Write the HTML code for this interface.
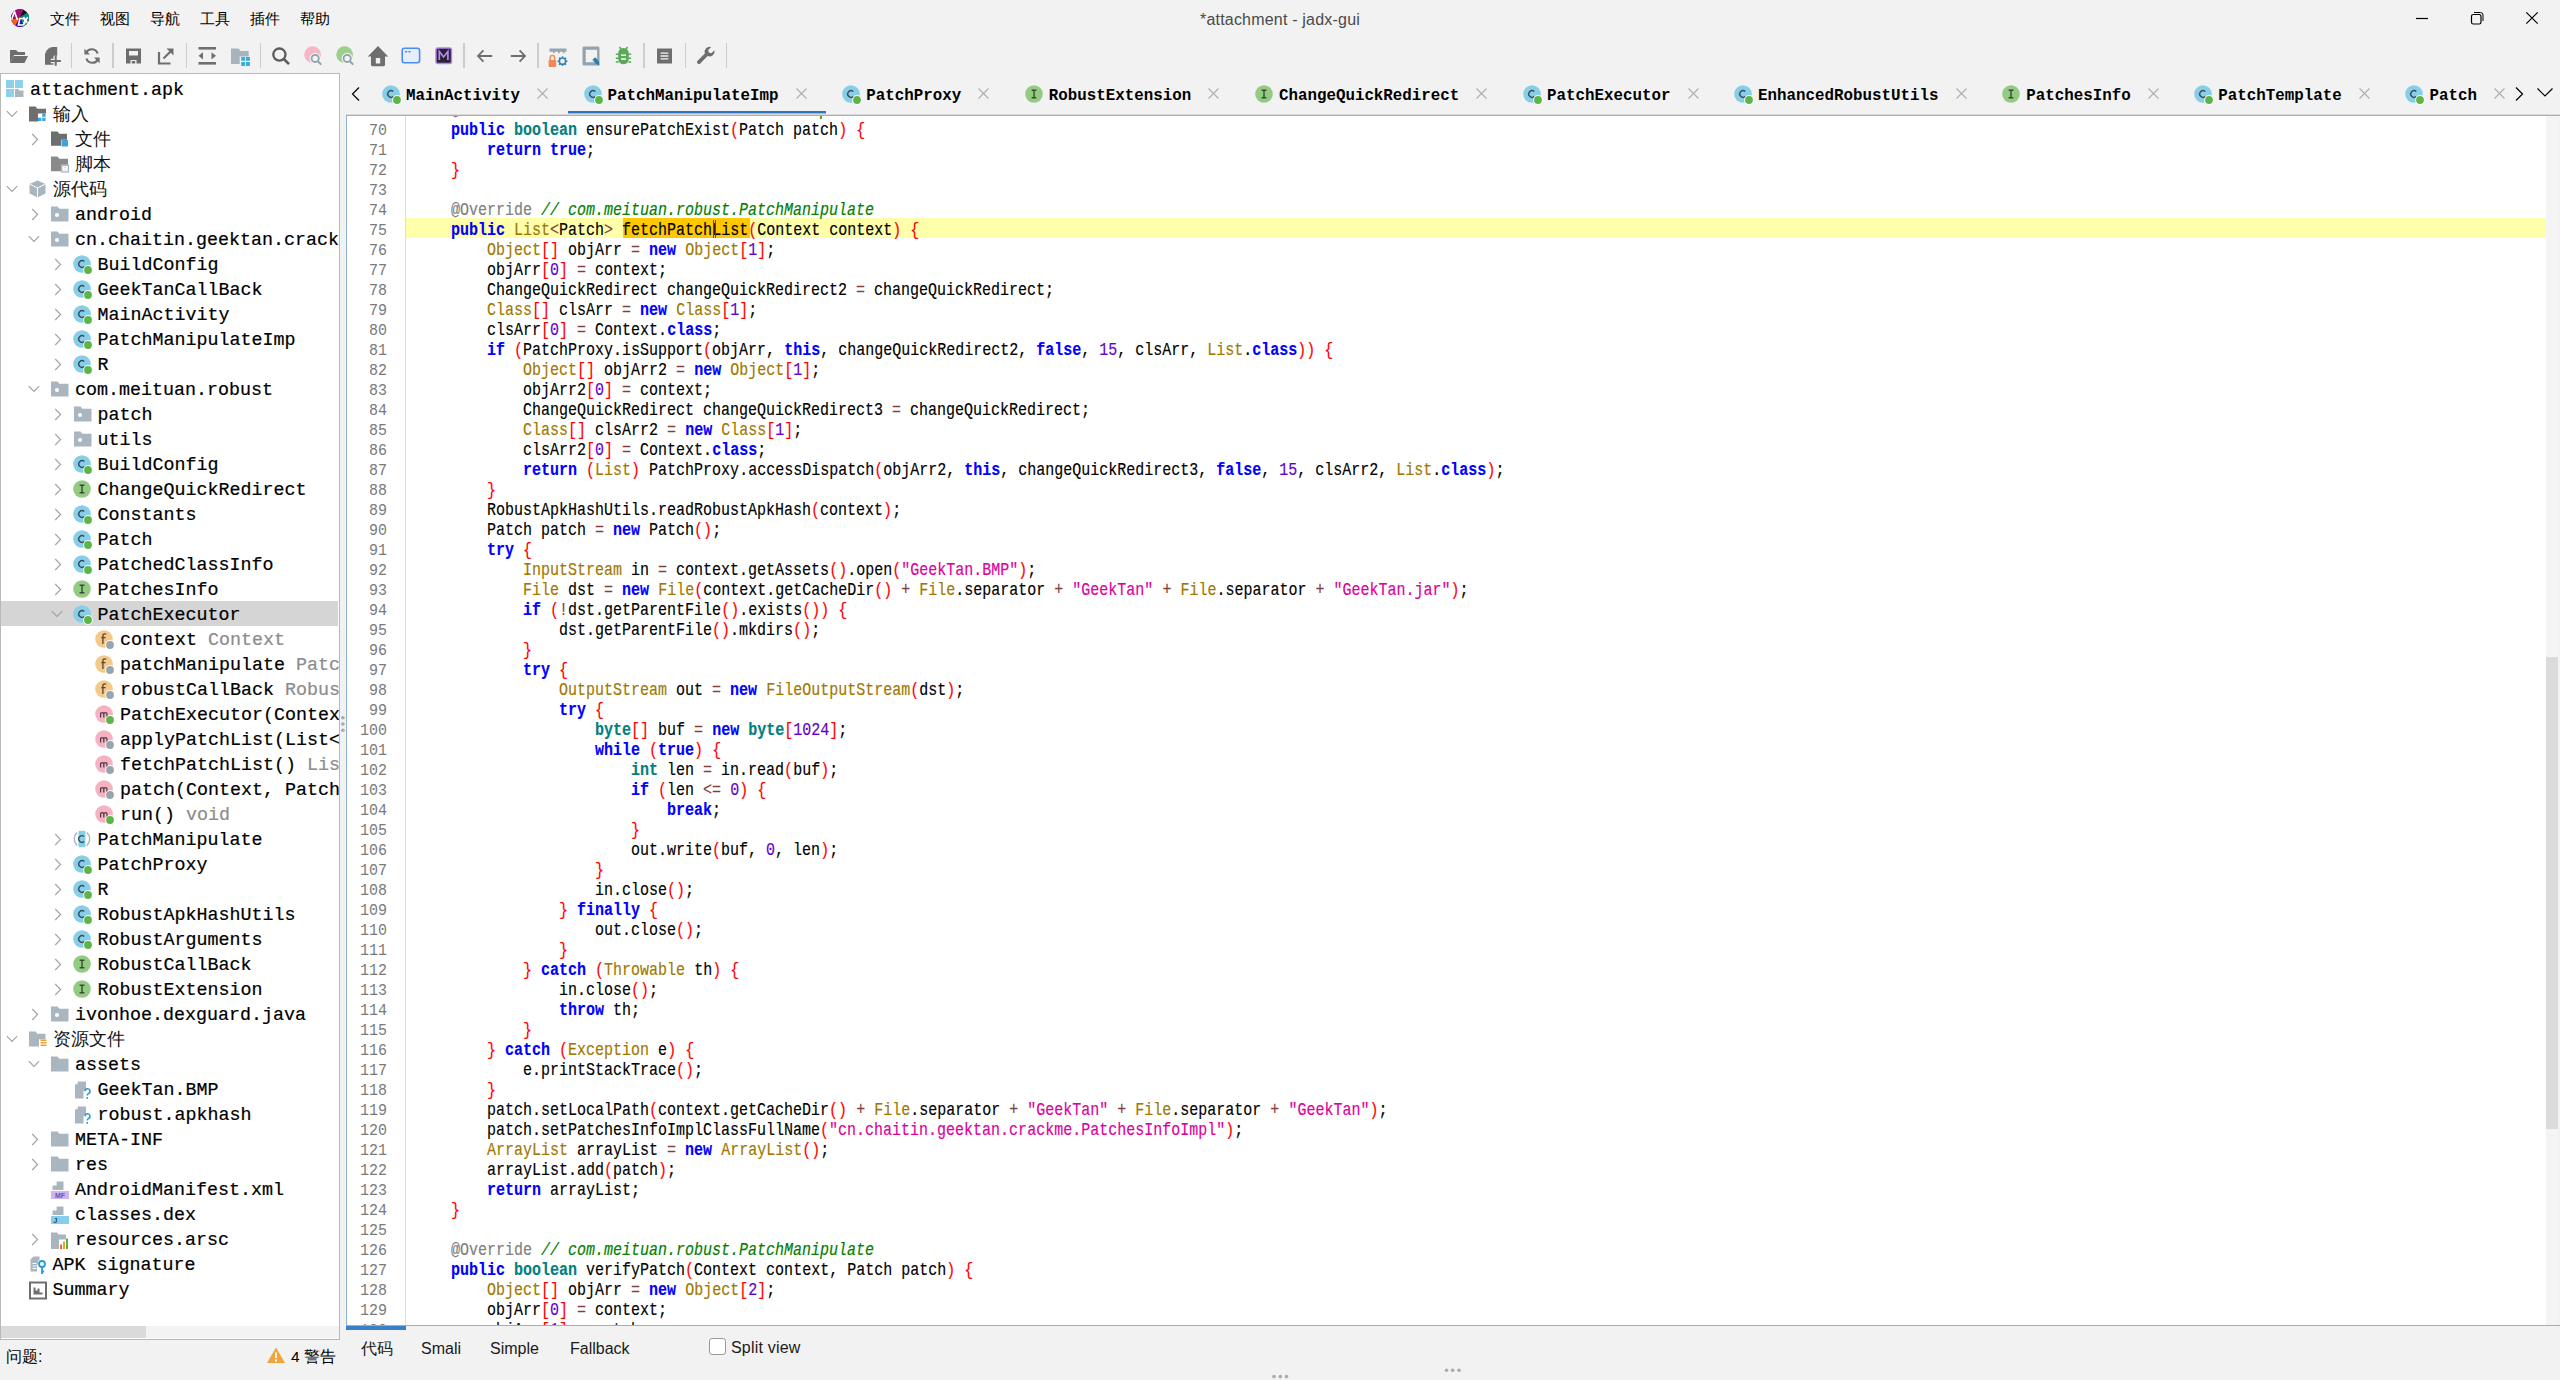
<!DOCTYPE html>
<html><head><meta charset="utf-8"><title>jadx-gui</title><style>
*{box-sizing:border-box}
html,body{margin:0;padding:0}
body{width:2560px;height:1380px;background:#F2F2F2;position:relative;overflow:hidden;font-family:"Liberation Sans",sans-serif;color:#000}
.ab{position:absolute}
svg.ab{display:block}
.menu{position:absolute;top:9px;font-size:15px;line-height:20px;color:#000}
.title{position:absolute;left:0;width:2560px;top:10px;text-align:center;font-size:16px;line-height:20px;color:#4A4A4A;letter-spacing:0.2px}
.sep{position:absolute;top:43px;width:1.5px;height:25px;background:#CDCDCD}
#tree{position:absolute;left:0;top:73px;width:340px;height:1267px;background:#fff;border:1px solid #B9B9B9;overflow:hidden}
#tree .rows{position:absolute;left:-1px;top:-74px;width:340px;height:1380px}
.row{position:absolute;left:0;width:338px;height:25px}
.row.sel{background:#D5D5D5}
.tt{position:absolute;top:2px;-webkit-text-stroke:0.2px currentColor;height:25px;line-height:25px;font-family:"Liberation Mono",monospace;font-size:18.33px;white-space:pre;color:#000}
.gr{color:#8C8C8C}
.cjk{-webkit-text-stroke:0;color:#111}
#hsb{position:absolute;left:1px;top:1326px;width:338px;height:12px;background:#F3F3F3}
#hsb div{position:absolute;left:0;top:0;width:145px;height:12px;background:#DADADA}
.tabt{position:absolute;top:86px;height:20px;line-height:20px;font-family:"Liberation Mono",monospace;font-weight:bold;font-size:15.83px;white-space:pre;color:#000}
#editor{position:absolute;left:346px;top:115px;width:2214px;height:1211px;border:1px solid #8FB2DA;border-right:none;background:#fff;overflow:hidden}
#gutter{position:absolute;left:0;top:0;width:59px;height:100%;border-right:1px solid #DDDDDD;background:#fff}
.gl{position:absolute;left:0;width:40px;height:20px;transform:scaleY(1.1);transform-origin:0 -7px;line-height:20px;text-align:right;font-family:"Liberation Mono",monospace;font-size:15px;color:#7A7A7A}
#code{position:absolute;left:68px;top:0;width:2130px;height:100%}
.cl{position:absolute;left:0;height:20px;-webkit-text-stroke:0.15px currentColor;transform:scaleY(1.18);transform-origin:0 2px;line-height:20px;font-family:"Liberation Mono",monospace;font-size:15px;white-space:pre;color:#000}
.cl b{font-weight:bold}
.kw{color:#0000FF}
.dt{color:#008080}
.sd{color:#A07800}
.se{color:#FF0000}
.op{color:#804040}
.nu{color:#6400C8}
.st{color:#DC009C}
.an{color:#808080}
.cm{color:#008000;font-style:italic}
#vsb{position:absolute;left:2199px;top:0;width:12px;height:100%;background:#F4F4F4;border-right:2px solid #F2F2F2;box-sizing:content-box}
#vsb div{position:absolute;left:0;top:541px;width:12px;height:472px;background:#DBDBDB}
.btab{position:absolute;top:1339px;font-size:16px;line-height:20px;color:#1A1A1A}
</style></head>
<body>
<svg class="ab" style="left:10px;top:8px" width="20" height="20" viewBox="0 0 20 20"><defs><clipPath id="jc"><circle cx="10" cy="10" r="9"/></clipPath></defs><g clip-path="url(#jc)"><rect width="20" height="20" fill="#111"/><path d="M0 12 L10 9 L6 20 L0 20z" fill="#FF5A1F"/><path d="M2 0 L14 0 L10 9 L0 11z" fill="#A0107A"/><path d="M10 9 L20 3 L20 20 L14 20z" fill="#0A8A80"/><path d="M10 9 L14 20 L4 20z" fill="#2A10C8"/><path d="M1.5 12 4.4 3.5 7.5 12" stroke="#fff" stroke-width="1.6" fill="none"/><path d="M8.5 17 9.8 10.5h2.5a2.5 3 0 0 1 0 6.5z" stroke="#fff" stroke-width="1.6" fill="none"/><path d="M13.5 9 17.8 15.5M17.8 9l-4.3 6.5" stroke="#fff" stroke-width="1.6"/></g></svg>
<div class="menu" style="left:50px">文件</div><div class="menu" style="left:100px">视图</div><div class="menu" style="left:150px">导航</div><div class="menu" style="left:200px">工具</div><div class="menu" style="left:250px">插件</div><div class="menu" style="left:300px">帮助</div>
<div class="title">*attachment - jadx-gui</div>
<svg class="ab" style="left:2414px;top:10px" width="16" height="16" viewBox="0 0 16 16"><path d="M2 8.5h12" stroke="#000" stroke-width="1.2"/></svg><svg class="ab" style="left:2469px;top:10px" width="16" height="16" viewBox="0 0 16 16"><rect x="2.5" y="4.5" width="9.5" height="9.5" rx="1.8" stroke="#000" stroke-width="1.2" fill="none"/><path d="M5 2.5h6.5a2.5 2.5 0 0 1 2.5 2.5V11" stroke="#000" stroke-width="1" fill="none"/></svg><svg class="ab" style="left:2524px;top:10px" width="16" height="16" viewBox="0 0 16 16"><path d="M2.3 2.3l11.4 11.4M13.7 2.3 2.3 13.7" stroke="#000" stroke-width="1.2"/></svg>
<svg class="ab" style="left:9px;top:48px" width="20" height="17" viewBox="0 0 20 17"><path d="M1 2h6l2 2h7v3H5L1 15z" fill="#6E6E6E"/><path d="M4.5 8H19l-3.5 7H1z" fill="#6E6E6E"/></svg><svg class="ab" style="left:44px;top:46px" width="19" height="22" viewBox="0 0 19 22"><path d="M1.3 5.7 6.2.9v4.8z" fill="#6E6E6E"/><path d="M1 7.6 7.6 1h5.6v17.8H1z" fill="#6E6E6E"/><path d="M11.7 9.8v10M6.9 15h10" stroke="#F2F2F2" stroke-width="4.4" fill="none"/><path d="M11.7 9.8v10M6.9 15h10" stroke="#6E6E6E" stroke-width="2" fill="none"/></svg><svg class="ab" style="left:83px;top:47px" width="18" height="18" viewBox="0 0 18 18"><path d="M14.6 6.5A6.2 6.2 0 0 0 3.2 5.6" stroke="#6E6E6E" stroke-width="2.2" fill="none"/><path d="M1.4 1.8v5.6H7z" fill="#6E6E6E"/><path d="M3.4 11.5A6.2 6.2 0 0 0 14.8 12.4" stroke="#6E6E6E" stroke-width="2.2" fill="none"/><path d="M16.6 16.2v-5.6H11z" fill="#6E6E6E"/></svg><svg class="ab" style="left:125px;top:47px" width="17" height="18" viewBox="0 0 17 18"><path d="M1 1.5h15v15h-4.5v-3.5h-6v3.5H1zM4 4v4.5h9V4z" fill="#6E6E6E" fill-rule="evenodd"/><rect x="6.8" y="14" width="3.4" height="2.5" fill="#6E6E6E"/></svg><svg class="ab" style="left:157px;top:47px" width="18" height="18" viewBox="0 0 18 18"><path d="M2 5v11.5h11.5" stroke="#6E6E6E" stroke-width="2.2" fill="none"/><path d="M6.5 11.5l7-7" stroke="#6E6E6E" stroke-width="2.2"/><path d="M9.5 1.5h7v7z" fill="#6E6E6E"/></svg><svg class="ab" style="left:197px;top:46px" width="20" height="20" viewBox="0 0 20 20"><rect x="1.5" y="1" width="17.5" height="2.6" fill="#6E6E6E"/><rect x="1.5" y="16" width="17.5" height="2.6" fill="#6E6E6E"/><path d="M1.5 9.8 6 6.2v7.2zM19 9.8l-4.5-3.6v7.2z" fill="#6E6E6E"/></svg><svg class="ab" style="left:230px;top:47px" width="22" height="21" viewBox="0 0 22 21"><path d="M1 1.5h7.5l2.2 2.5h8v5.5h-9v7.5H1z" fill="#A7B4BE"/><g fill="#3BACDF"><rect x="11.2" y="10" width="3.8" height="3.8"/><rect x="15.9" y="10" width="4" height="3.8"/><rect x="11.2" y="15" width="3.8" height="4"/><rect x="15.9" y="15" width="4" height="4"/></g></svg><svg class="ab" style="left:271px;top:46px" width="20" height="20" viewBox="0 0 20 20"><circle cx="8.4" cy="8.6" r="6.1" stroke="#5C5C5C" stroke-width="2.3" fill="none"/><path d="M12.8 13l5.2 5.2" stroke="#5C5C5C" stroke-width="2.6"/></svg><svg class="ab" style="left:304px;top:46px" width="20" height="20" viewBox="0 0 20 20"><circle cx="8.6" cy="8.6" r="8.4" fill="#F6B6C6"/><circle cx="11.2" cy="12.4" r="5.6" fill="#F2F2F2"/><circle cx="11.2" cy="12.4" r="3.6" stroke="#8DA2AE" stroke-width="1.8" fill="none"/><path d="M13.8 15.2l3.4 3.4" stroke="#8DA2AE" stroke-width="2"/></svg><svg class="ab" style="left:336px;top:46px" width="20" height="20" viewBox="0 0 20 20"><circle cx="8.6" cy="8.6" r="8.4" fill="#9DD08A"/><circle cx="11.2" cy="12.4" r="5.6" fill="#F2F2F2"/><circle cx="11.2" cy="12.4" r="3.6" stroke="#8DA2AE" stroke-width="1.8" fill="none"/><path d="M13.8 15.2l3.4 3.4" stroke="#8DA2AE" stroke-width="2"/></svg><svg class="ab" style="left:367px;top:45px" width="22" height="22" viewBox="0 0 22 22"><path d="M11 1 .8 11.4h3.2v8.4c0 .9.5 1.4 1.4 1.4h11.2c.9 0 1.4-.5 1.4-1.4v-8.4h3.2zM8.8 13h4.4v5.6H8.8z" fill="#6E6E6E" fill-rule="evenodd"/></svg><svg class="ab" style="left:401px;top:47px" width="20" height="18" viewBox="0 0 20 18"><rect x="1.2" y="1.2" width="17.4" height="14.6" rx="2.2" fill="#E7EEFB" stroke="#4B8BF4" stroke-width="1.6"/><rect x="4" y="4" width="2.2" height="1.4" fill="#4B8BF4"/><rect x="7.4" y="4" width="2.2" height="1.4" fill="#4B8BF4"/></svg><svg class="ab" style="left:435px;top:47px" width="18" height="18" viewBox="0 0 18 18"><rect x="1" y="1" width="15.5" height="15.5" rx="1.8" fill="#2A2233" stroke="#B384EC" stroke-width="1.4"/><path d="M4.3 13V4.4l4.3 5.5 4.3-5.5V13" stroke="#B48CF0" stroke-width="1.7" fill="none"/></svg><svg class="ab" style="left:476px;top:49px" width="18" height="15" viewBox="0 0 18 15"><path d="M7.4 1.4 2 7l5.4 5.6M2.2 7h14" stroke="#6E6E6E" stroke-width="1.8" fill="none"/></svg><svg class="ab" style="left:509px;top:49px" width="18" height="15" viewBox="0 0 18 15"><path d="M10.6 1.4 16 7l-5.4 5.6M15.8 7h-14" stroke="#6E6E6E" stroke-width="1.8" fill="none"/></svg><svg class="ab" style="left:547px;top:47px" width="23" height="21" viewBox="0 0 23 21"><path d="M2.5 1.5h17v3.2h-2v1.6h-1.6V4.7h-3.2v1.6H11V4.7H7.7v1.6H6.1V4.7H2.5z" fill="#95A6B2"/><rect x="1.6" y="13" width="7.6" height="7" rx=".8" fill="#F2885A"/><path d="M3.2 13v-2.2a2.2 2.2 0 0 1 4.4 0V13" stroke="#F2885A" stroke-width="1.5" fill="none"/><circle cx="15.5" cy="14.2" r="3.2" stroke="#2F86B8" stroke-width="1.7" fill="none"/><path d="M15.5 9.3v1.8M15.5 17.3v1.8M10.6 14.2h1.8M18.6 14.2h1.8M12 10.7l1.3 1.3M17.7 16.4l1.3 1.3M12 17.7l1.3-1.3M17.7 12l1.3-1.3" stroke="#2F86B8" stroke-width="1.4"/></svg><svg class="ab" style="left:581px;top:45px" width="20" height="22" viewBox="0 0 20 22"><path d="M2.5 1.5h14.5a1.5 1.5 0 0 1 1.5 1.5v17.5H3a1.5 1.5 0 0 1-1.5-1.5V2.5zM4.7 4.7v12.6h8.6l-2.2-2.4 2.5-2.1 2.5 2.9V4.7z" fill="#93A3AF" fill-rule="evenodd"/><path d="M12 14.2l2.4-2 3.6 4.6.2 3.6-3.5-1.6z" fill="#2A7FB0"/></svg><svg class="ab" style="left:615px;top:46px" width="17" height="20" viewBox="0 0 17 20"><path d="M4.4 1l2.6 3.4M12.6 1 10 4.4" stroke="#5BA85B" stroke-width="1.6"/><path d="M3.2 7.2a5.3 5.3 0 0 1 10.6 0V13a5.3 5.3 0 0 1-10.6 0z" fill="#5BA85B"/><path d="M.8 8.2h2.8M.8 12.2h2.8M.8 16h2.8M13.4 8.2h2.8M13.4 12.2h2.8M13.4 16h2.8" stroke="#5BA85B" stroke-width="1.5"/><rect x="6" y="8.4" width="5" height="1.6" fill="#F2F2F2"/><rect x="6" y="12.2" width="5" height="1.6" fill="#F2F2F2"/></svg><svg class="ab" style="left:656px;top:47px" width="17" height="18" viewBox="0 0 17 18"><rect x="1" y="1.5" width="15" height="15" fill="#6E6E6E"/><path d="M4.6 6.2h7.8M4.6 9h7.8M4.6 11.8h7.8" stroke="#F2F2F2" stroke-width="1.3"/></svg><svg class="ab" style="left:696px;top:46px" width="20" height="20" viewBox="0 0 20 20"><path d="M18.4 4.2l-3 3-2.6-.6-.6-2.6 3-3a5 5 0 0 0-6.3 6.4L1.6 14.7a1.9 1.9 0 0 0 2.7 2.7l7.3-7.3a5 5 0 0 0 6.8-5.9z" fill="#6E6E6E"/></svg><div class="sep" style="left:70.75px"></div><div class="sep" style="left:112.25px"></div><div class="sep" style="left:185.75px"></div><div class="sep" style="left:259.75px"></div><div class="sep" style="left:463.25px"></div><div class="sep" style="left:537.25px"></div><div class="sep" style="left:643.25px"></div><div class="sep" style="left:684.75px"></div><div class="sep" style="left:725.75px"></div>
<div id="tree"><div class="rows"><div class="row" style="top:76px"><div class="ab" style="left:5.0px;top:3.5px"><svg width="20" height="20" viewBox="0 1.5 20 20"><rect x="1" y="1.5" width="8" height="8" fill="#8DD0EA"/><rect x="10" y="1.5" width="8" height="8" fill="#8DD0EA"/><rect x="1" y="10.5" width="8" height="8" fill="#8DD0EA"/><path d="M10 10.5h3l1.4 1.6H18.5v6.4H10z" fill="#A9B5BF"/></svg></div><div class="tt" style="left:30.0px">attachment.apk<span class="gr"></span></div></div><div class="row" style="top:101px"><svg class="ab" style="left:6px;top:9px" width="12" height="8" viewBox="0 0 12 8"><path d="M.8 1.2 6 6.4l5.2-5.2" stroke="#A0A0A0" stroke-width="1.1" fill="none"/></svg><div class="ab" style="left:27.5px;top:3.5px"><svg width="20" height="18" viewBox="0 0 20 18"><path d="M1 1.5h6.5l1.8 2.2H18v4.8h-8v8H1z" fill="#6E6E6E"/><g fill="#3EA1DD"><rect x="14.2" y="8.5" width="3.3" height="3.3"/><rect x="10" y="12.7" width="3.3" height="3.3"/><rect x="14.2" y="12.7" width="3.3" height="3.3"/></g></svg></div><div class="tt" style="left:52.5px"><span class="cjk">输入</span><span class="gr"></span></div></div><div class="row" style="top:126px"><svg class="ab" style="left:31px;top:7px" width="8" height="13" viewBox="0 0 8 13"><path d="M1.2 1 6.6 6.5 1.2 12" stroke="#A0A0A0" stroke-width="1.1" fill="none"/></svg><div class="ab" style="left:50.0px;top:3.5px"><svg width="20" height="18" viewBox="0 0 20 18"><path d="M1 1.5h6.5l1.8 2.2H17v6h-6v6H1z" fill="#6E6E6E"/><rect x="11.5" y="10" width="6.5" height="6.5" fill="#3EA1DD"/></svg></div><div class="tt" style="left:75.0px"><span class="cjk">文件</span><span class="gr"></span></div></div><div class="row" style="top:151px"><div class="ab" style="left:50.0px;top:3.5px"><svg width="20" height="18" viewBox="0 0 20 18"><path d="M1 1.5h6.5l1.8 2.2H18v6h-7v6.5H1z" fill="#8A8A8A"/><rect x="11.8" y="10.3" width="6.6" height="6.6" fill="#fff" stroke="#A9B5BF" stroke-width="1.3"/><path d="M15.1 12v1M15.1 14.3v1" stroke="#A9B5BF" stroke-width="1"/></svg></div><div class="tt" style="left:75.0px"><span class="cjk">脚本</span><span class="gr"></span></div></div><div class="row" style="top:176px"><svg class="ab" style="left:6px;top:9px" width="12" height="8" viewBox="0 0 12 8"><path d="M.8 1.2 6 6.4l5.2-5.2" stroke="#A0A0A0" stroke-width="1.1" fill="none"/></svg><div class="ab" style="left:27.5px;top:3.5px"><svg width="20" height="20" viewBox="0 1 20 20"><path d="M9.5 1.5 17.5 5v9.5L9.5 18.5 1.5 14.5V5z" fill="#A9B5BF"/><path d="M1.8 5.2 9.5 9l7.7-3.8M9.5 9v9.3" stroke="#fff" stroke-width="1" fill="none"/></svg></div><div class="tt" style="left:52.5px"><span class="cjk">源代码</span><span class="gr"></span></div></div><div class="row" style="top:201px"><svg class="ab" style="left:31px;top:7px" width="8" height="13" viewBox="0 0 8 13"><path d="M1.2 1 6.6 6.5 1.2 12" stroke="#A0A0A0" stroke-width="1.1" fill="none"/></svg><div class="ab" style="left:50.0px;top:3.5px"><svg width="20" height="18" viewBox="0 0 20 18"><path d="M1 1.5h6.5l1.8 2.2H18.5v12.8H1z" fill="#A9B5BF"/><circle cx="7" cy="10" r="2" fill="#fff"/></svg></div><div class="tt" style="left:75.0px">android<span class="gr"></span></div></div><div class="row" style="top:226px"><svg class="ab" style="left:28px;top:9px" width="12" height="8" viewBox="0 0 12 8"><path d="M.8 1.2 6 6.4l5.2-5.2" stroke="#A0A0A0" stroke-width="1.1" fill="none"/></svg><div class="ab" style="left:50.0px;top:3.5px"><svg width="20" height="18" viewBox="0 0 20 18"><path d="M1 1.5h6.5l1.8 2.2H18.5v12.8H1z" fill="#A9B5BF"/><circle cx="7" cy="10" r="2" fill="#fff"/></svg></div><div class="tt" style="left:75.0px">cn.chaitin.geektan.crackme<span class="gr"></span></div></div><div class="row" style="top:251px"><svg class="ab" style="left:54px;top:7px" width="8" height="13" viewBox="0 0 8 13"><path d="M1.2 1 6.6 6.5 1.2 12" stroke="#A0A0A0" stroke-width="1.1" fill="none"/></svg><div class="ab" style="left:72.5px;top:3.5px"><svg width="20" height="20" viewBox="0 0 20 20"><circle cx="9" cy="9" r="8.8" fill="#87CEE8"/><path d="M11.3 6.4A3.4 3.4 0 1 0 11.3 11.6" stroke="#3B4D57" stroke-width="1.35" fill="none"/><circle cx="15" cy="15" r="4.9" fill="#fff" fill-opacity="0.9"/><circle cx="15" cy="15" r="3.9" fill="#5DB548"/></svg></div><div class="tt" style="left:97.5px">BuildConfig<span class="gr"></span></div></div><div class="row" style="top:276px"><svg class="ab" style="left:54px;top:7px" width="8" height="13" viewBox="0 0 8 13"><path d="M1.2 1 6.6 6.5 1.2 12" stroke="#A0A0A0" stroke-width="1.1" fill="none"/></svg><div class="ab" style="left:72.5px;top:3.5px"><svg width="20" height="20" viewBox="0 0 20 20"><circle cx="9" cy="9" r="8.8" fill="#87CEE8"/><path d="M11.3 6.4A3.4 3.4 0 1 0 11.3 11.6" stroke="#3B4D57" stroke-width="1.35" fill="none"/><circle cx="15" cy="15" r="4.9" fill="#fff" fill-opacity="0.9"/><circle cx="15" cy="15" r="3.9" fill="#5DB548"/></svg></div><div class="tt" style="left:97.5px">GeekTanCallBack<span class="gr"></span></div></div><div class="row" style="top:301px"><svg class="ab" style="left:54px;top:7px" width="8" height="13" viewBox="0 0 8 13"><path d="M1.2 1 6.6 6.5 1.2 12" stroke="#A0A0A0" stroke-width="1.1" fill="none"/></svg><div class="ab" style="left:72.5px;top:3.5px"><svg width="20" height="20" viewBox="0 0 20 20"><circle cx="9" cy="9" r="8.8" fill="#87CEE8"/><path d="M11.3 6.4A3.4 3.4 0 1 0 11.3 11.6" stroke="#3B4D57" stroke-width="1.35" fill="none"/><circle cx="15" cy="15" r="4.9" fill="#fff" fill-opacity="0.9"/><circle cx="15" cy="15" r="3.9" fill="#5DB548"/></svg></div><div class="tt" style="left:97.5px">MainActivity<span class="gr"></span></div></div><div class="row" style="top:326px"><svg class="ab" style="left:54px;top:7px" width="8" height="13" viewBox="0 0 8 13"><path d="M1.2 1 6.6 6.5 1.2 12" stroke="#A0A0A0" stroke-width="1.1" fill="none"/></svg><div class="ab" style="left:72.5px;top:3.5px"><svg width="20" height="20" viewBox="0 0 20 20"><circle cx="9" cy="9" r="8.8" fill="#87CEE8"/><path d="M11.3 6.4A3.4 3.4 0 1 0 11.3 11.6" stroke="#3B4D57" stroke-width="1.35" fill="none"/><circle cx="15" cy="15" r="4.9" fill="#fff" fill-opacity="0.9"/><circle cx="15" cy="15" r="3.9" fill="#5DB548"/></svg></div><div class="tt" style="left:97.5px">PatchManipulateImp<span class="gr"></span></div></div><div class="row" style="top:351px"><svg class="ab" style="left:54px;top:7px" width="8" height="13" viewBox="0 0 8 13"><path d="M1.2 1 6.6 6.5 1.2 12" stroke="#A0A0A0" stroke-width="1.1" fill="none"/></svg><div class="ab" style="left:72.5px;top:3.5px"><svg width="20" height="20" viewBox="0 0 20 20"><circle cx="9" cy="9" r="8.8" fill="#87CEE8"/><path d="M11.3 6.4A3.4 3.4 0 1 0 11.3 11.6" stroke="#3B4D57" stroke-width="1.35" fill="none"/><circle cx="15" cy="15" r="4.9" fill="#fff" fill-opacity="0.9"/><circle cx="15" cy="15" r="3.9" fill="#5DB548"/></svg></div><div class="tt" style="left:97.5px">R<span class="gr"></span></div></div><div class="row" style="top:376px"><svg class="ab" style="left:28px;top:9px" width="12" height="8" viewBox="0 0 12 8"><path d="M.8 1.2 6 6.4l5.2-5.2" stroke="#A0A0A0" stroke-width="1.1" fill="none"/></svg><div class="ab" style="left:50.0px;top:3.5px"><svg width="20" height="18" viewBox="0 0 20 18"><path d="M1 1.5h6.5l1.8 2.2H18.5v12.8H1z" fill="#A9B5BF"/><circle cx="7" cy="10" r="2" fill="#fff"/></svg></div><div class="tt" style="left:75.0px">com.meituan.robust<span class="gr"></span></div></div><div class="row" style="top:401px"><svg class="ab" style="left:54px;top:7px" width="8" height="13" viewBox="0 0 8 13"><path d="M1.2 1 6.6 6.5 1.2 12" stroke="#A0A0A0" stroke-width="1.1" fill="none"/></svg><div class="ab" style="left:72.5px;top:3.5px"><svg width="20" height="18" viewBox="0 0 20 18"><path d="M1 1.5h6.5l1.8 2.2H18.5v12.8H1z" fill="#A9B5BF"/><circle cx="7" cy="10" r="2" fill="#fff"/></svg></div><div class="tt" style="left:97.5px">patch<span class="gr"></span></div></div><div class="row" style="top:426px"><svg class="ab" style="left:54px;top:7px" width="8" height="13" viewBox="0 0 8 13"><path d="M1.2 1 6.6 6.5 1.2 12" stroke="#A0A0A0" stroke-width="1.1" fill="none"/></svg><div class="ab" style="left:72.5px;top:3.5px"><svg width="20" height="18" viewBox="0 0 20 18"><path d="M1 1.5h6.5l1.8 2.2H18.5v12.8H1z" fill="#A9B5BF"/><circle cx="7" cy="10" r="2" fill="#fff"/></svg></div><div class="tt" style="left:97.5px">utils<span class="gr"></span></div></div><div class="row" style="top:451px"><svg class="ab" style="left:54px;top:7px" width="8" height="13" viewBox="0 0 8 13"><path d="M1.2 1 6.6 6.5 1.2 12" stroke="#A0A0A0" stroke-width="1.1" fill="none"/></svg><div class="ab" style="left:72.5px;top:3.5px"><svg width="20" height="20" viewBox="0 0 20 20"><circle cx="9" cy="9" r="8.8" fill="#87CEE8"/><path d="M11.3 6.4A3.4 3.4 0 1 0 11.3 11.6" stroke="#3B4D57" stroke-width="1.35" fill="none"/><circle cx="15" cy="15" r="4.9" fill="#fff" fill-opacity="0.9"/><circle cx="15" cy="15" r="3.9" fill="#5DB548"/></svg></div><div class="tt" style="left:97.5px">BuildConfig<span class="gr"></span></div></div><div class="row" style="top:476px"><svg class="ab" style="left:54px;top:7px" width="8" height="13" viewBox="0 0 8 13"><path d="M1.2 1 6.6 6.5 1.2 12" stroke="#A0A0A0" stroke-width="1.1" fill="none"/></svg><div class="ab" style="left:72.5px;top:3.5px"><svg width="20" height="20" viewBox="0 0 20 20"><circle cx="9" cy="9" r="8.8" fill="#93CB83"/><path d="M6.6 5.3h4.8M6.6 12.7h4.8M9 5.3v7.4" stroke="#3A4A36" stroke-width="1.4" fill="none"/></svg></div><div class="tt" style="left:97.5px">ChangeQuickRedirect<span class="gr"></span></div></div><div class="row" style="top:501px"><svg class="ab" style="left:54px;top:7px" width="8" height="13" viewBox="0 0 8 13"><path d="M1.2 1 6.6 6.5 1.2 12" stroke="#A0A0A0" stroke-width="1.1" fill="none"/></svg><div class="ab" style="left:72.5px;top:3.5px"><svg width="20" height="20" viewBox="0 0 20 20"><circle cx="9" cy="9" r="8.8" fill="#87CEE8"/><path d="M11.3 6.4A3.4 3.4 0 1 0 11.3 11.6" stroke="#3B4D57" stroke-width="1.35" fill="none"/><circle cx="15" cy="15" r="4.9" fill="#fff" fill-opacity="0.9"/><circle cx="15" cy="15" r="3.9" fill="#5DB548"/></svg></div><div class="tt" style="left:97.5px">Constants<span class="gr"></span></div></div><div class="row" style="top:526px"><svg class="ab" style="left:54px;top:7px" width="8" height="13" viewBox="0 0 8 13"><path d="M1.2 1 6.6 6.5 1.2 12" stroke="#A0A0A0" stroke-width="1.1" fill="none"/></svg><div class="ab" style="left:72.5px;top:3.5px"><svg width="20" height="20" viewBox="0 0 20 20"><circle cx="9" cy="9" r="8.8" fill="#87CEE8"/><path d="M11.3 6.4A3.4 3.4 0 1 0 11.3 11.6" stroke="#3B4D57" stroke-width="1.35" fill="none"/><circle cx="15" cy="15" r="4.9" fill="#fff" fill-opacity="0.9"/><circle cx="15" cy="15" r="3.9" fill="#5DB548"/></svg></div><div class="tt" style="left:97.5px">Patch<span class="gr"></span></div></div><div class="row" style="top:551px"><svg class="ab" style="left:54px;top:7px" width="8" height="13" viewBox="0 0 8 13"><path d="M1.2 1 6.6 6.5 1.2 12" stroke="#A0A0A0" stroke-width="1.1" fill="none"/></svg><div class="ab" style="left:72.5px;top:3.5px"><svg width="20" height="20" viewBox="0 0 20 20"><circle cx="9" cy="9" r="8.8" fill="#87CEE8"/><path d="M11.3 6.4A3.4 3.4 0 1 0 11.3 11.6" stroke="#3B4D57" stroke-width="1.35" fill="none"/><circle cx="15" cy="15" r="4.9" fill="#fff" fill-opacity="0.9"/><circle cx="15" cy="15" r="3.9" fill="#5DB548"/></svg></div><div class="tt" style="left:97.5px">PatchedClassInfo<span class="gr"></span></div></div><div class="row" style="top:576px"><svg class="ab" style="left:54px;top:7px" width="8" height="13" viewBox="0 0 8 13"><path d="M1.2 1 6.6 6.5 1.2 12" stroke="#A0A0A0" stroke-width="1.1" fill="none"/></svg><div class="ab" style="left:72.5px;top:3.5px"><svg width="20" height="20" viewBox="0 0 20 20"><circle cx="9" cy="9" r="8.8" fill="#93CB83"/><path d="M6.6 5.3h4.8M6.6 12.7h4.8M9 5.3v7.4" stroke="#3A4A36" stroke-width="1.4" fill="none"/></svg></div><div class="tt" style="left:97.5px">PatchesInfo<span class="gr"></span></div></div><div class="row sel" style="top:601px"><svg class="ab" style="left:51px;top:9px" width="12" height="8" viewBox="0 0 12 8"><path d="M.8 1.2 6 6.4l5.2-5.2" stroke="#A0A0A0" stroke-width="1.1" fill="none"/></svg><div class="ab" style="left:72.5px;top:3.5px"><svg width="20" height="20" viewBox="0 0 20 20"><circle cx="9" cy="9" r="8.8" fill="#87CEE8"/><path d="M11.3 6.4A3.4 3.4 0 1 0 11.3 11.6" stroke="#3B4D57" stroke-width="1.35" fill="none"/><circle cx="15" cy="15" r="4.9" fill="#fff" fill-opacity="0.9"/><circle cx="15" cy="15" r="3.9" fill="#5DB548"/></svg></div><div class="tt" style="left:97.5px">PatchExecutor<span class="gr"></span></div></div><div class="row" style="top:626px"><div class="ab" style="left:95.0px;top:3.5px"><svg width="20" height="20" viewBox="0 0 20 20"><circle cx="9" cy="9" r="8.8" fill="#F5C98A"/><path d="M11.2 4.3c-.5-.4-1-.5-1.5-.5-1.1 0-1.8.7-1.8 2V14M6.3 7.6h4.2" stroke="#574634" stroke-width="1.3" fill="none"/><circle cx="15" cy="15" r="4.9" fill="#fff" fill-opacity="0.9"/><circle cx="15" cy="15" r="3.9" fill="#97A4AE"/></svg></div><div class="tt" style="left:120.0px">context<span class="gr"> Context</span></div></div><div class="row" style="top:651px"><div class="ab" style="left:95.0px;top:3.5px"><svg width="20" height="20" viewBox="0 0 20 20"><circle cx="9" cy="9" r="8.8" fill="#F5C98A"/><path d="M11.2 4.3c-.5-.4-1-.5-1.5-.5-1.1 0-1.8.7-1.8 2V14M6.3 7.6h4.2" stroke="#574634" stroke-width="1.3" fill="none"/><circle cx="15" cy="15" r="4.9" fill="#fff" fill-opacity="0.9"/><circle cx="15" cy="15" r="3.9" fill="#97A4AE"/></svg></div><div class="tt" style="left:120.0px">patchManipulate<span class="gr"> PatchManipulate</span></div></div><div class="row" style="top:676px"><div class="ab" style="left:95.0px;top:3.5px"><svg width="20" height="20" viewBox="0 0 20 20"><circle cx="9" cy="9" r="8.8" fill="#F5C98A"/><path d="M11.2 4.3c-.5-.4-1-.5-1.5-.5-1.1 0-1.8.7-1.8 2V14M6.3 7.6h4.2" stroke="#574634" stroke-width="1.3" fill="none"/><circle cx="15" cy="15" r="4.9" fill="#fff" fill-opacity="0.9"/><circle cx="15" cy="15" r="3.9" fill="#97A4AE"/></svg></div><div class="tt" style="left:120.0px">robustCallBack<span class="gr"> RobustCallBack</span></div></div><div class="row" style="top:701px"><div class="ab" style="left:95.0px;top:3.5px"><svg width="20" height="20" viewBox="0 0 20 20"><circle cx="9" cy="9" r="8.8" fill="#F6B2C2"/><path d="M5.6 12.6V7.8M5.6 9c.3-.8 1-1.3 1.7-1.3.9 0 1.5.6 1.5 1.6v3.3M8.8 9c.3-.8 1-1.3 1.7-1.3.9 0 1.5.6 1.5 1.6v3.3" stroke="#4F3A40" stroke-width="1.25" fill="none"/><circle cx="15" cy="15" r="4.9" fill="#fff" fill-opacity="0.9"/><circle cx="15" cy="15" r="3.9" fill="#5DB548"/></svg></div><div class="tt" style="left:120.0px">PatchExecutor(Context, PatchManipulate, RobustCallBack)<span class="gr"></span></div></div><div class="row" style="top:726px"><div class="ab" style="left:95.0px;top:3.5px"><svg width="20" height="20" viewBox="0 0 20 20"><circle cx="9" cy="9" r="8.8" fill="#F6B2C2"/><path d="M5.6 12.6V7.8M5.6 9c.3-.8 1-1.3 1.7-1.3.9 0 1.5.6 1.5 1.6v3.3M8.8 9c.3-.8 1-1.3 1.7-1.3.9 0 1.5.6 1.5 1.6v3.3" stroke="#4F3A40" stroke-width="1.25" fill="none"/><circle cx="15" cy="15" r="4.9" fill="#fff" fill-opacity="0.9"/><circle cx="15" cy="15" r="3.9" fill="#97A4AE"/></svg></div><div class="tt" style="left:120.0px">applyPatchList(List&lt;Patch&gt;)<span class="gr"> void</span></div></div><div class="row" style="top:751px"><div class="ab" style="left:95.0px;top:3.5px"><svg width="20" height="20" viewBox="0 0 20 20"><circle cx="9" cy="9" r="8.8" fill="#F6B2C2"/><path d="M5.6 12.6V7.8M5.6 9c.3-.8 1-1.3 1.7-1.3.9 0 1.5.6 1.5 1.6v3.3M8.8 9c.3-.8 1-1.3 1.7-1.3.9 0 1.5.6 1.5 1.6v3.3" stroke="#4F3A40" stroke-width="1.25" fill="none"/><circle cx="15" cy="15" r="4.9" fill="#fff" fill-opacity="0.9"/><circle cx="15" cy="15" r="3.9" fill="#97A4AE"/></svg></div><div class="tt" style="left:120.0px">fetchPatchList()<span class="gr"> List&lt;Patch&gt;</span></div></div><div class="row" style="top:776px"><div class="ab" style="left:95.0px;top:3.5px"><svg width="20" height="20" viewBox="0 0 20 20"><circle cx="9" cy="9" r="8.8" fill="#F6B2C2"/><path d="M5.6 12.6V7.8M5.6 9c.3-.8 1-1.3 1.7-1.3.9 0 1.5.6 1.5 1.6v3.3M8.8 9c.3-.8 1-1.3 1.7-1.3.9 0 1.5.6 1.5 1.6v3.3" stroke="#4F3A40" stroke-width="1.25" fill="none"/><circle cx="15" cy="15" r="4.9" fill="#fff" fill-opacity="0.9"/><circle cx="15" cy="15" r="3.9" fill="#97A4AE"/></svg></div><div class="tt" style="left:120.0px">patch(Context, Patch)<span class="gr"> boolean</span></div></div><div class="row" style="top:801px"><div class="ab" style="left:95.0px;top:3.5px"><svg width="20" height="20" viewBox="0 0 20 20"><circle cx="9" cy="9" r="8.8" fill="#F6B2C2"/><path d="M5.6 12.6V7.8M5.6 9c.3-.8 1-1.3 1.7-1.3.9 0 1.5.6 1.5 1.6v3.3M8.8 9c.3-.8 1-1.3 1.7-1.3.9 0 1.5.6 1.5 1.6v3.3" stroke="#4F3A40" stroke-width="1.25" fill="none"/><circle cx="15" cy="15" r="4.9" fill="#fff" fill-opacity="0.9"/><circle cx="15" cy="15" r="3.9" fill="#5DB548"/></svg></div><div class="tt" style="left:120.0px">run()<span class="gr"> void</span></div></div><div class="row" style="top:826px"><svg class="ab" style="left:54px;top:7px" width="8" height="13" viewBox="0 0 8 13"><path d="M1.2 1 6.6 6.5 1.2 12" stroke="#A0A0A0" stroke-width="1.1" fill="none"/></svg><div class="ab" style="left:72.5px;top:3.5px"><svg width="20" height="20" viewBox="0 0 20 20"><path d="M4.2 2.6A8.6 8.6 0 0 0 4.2 15.4" fill="none" stroke="#B0B8BE" stroke-width="1.4"/><path d="M13.8 2.6A8.6 8.6 0 0 1 13.8 15.4" fill="none" stroke="#B0B8BE" stroke-width="1.4"/><rect x="5.5" y="0.8" width="7" height="16.4" rx="1" fill="#87CEE8"/><path d="M11 6.6A3.2 3.2 0 1 0 11 11.4" stroke="#3B4D57" stroke-width="1.3" fill="none"/></svg></div><div class="tt" style="left:97.5px">PatchManipulate<span class="gr"></span></div></div><div class="row" style="top:851px"><svg class="ab" style="left:54px;top:7px" width="8" height="13" viewBox="0 0 8 13"><path d="M1.2 1 6.6 6.5 1.2 12" stroke="#A0A0A0" stroke-width="1.1" fill="none"/></svg><div class="ab" style="left:72.5px;top:3.5px"><svg width="20" height="20" viewBox="0 0 20 20"><circle cx="9" cy="9" r="8.8" fill="#87CEE8"/><path d="M11.3 6.4A3.4 3.4 0 1 0 11.3 11.6" stroke="#3B4D57" stroke-width="1.35" fill="none"/><circle cx="15" cy="15" r="4.9" fill="#fff" fill-opacity="0.9"/><circle cx="15" cy="15" r="3.9" fill="#5DB548"/></svg></div><div class="tt" style="left:97.5px">PatchProxy<span class="gr"></span></div></div><div class="row" style="top:876px"><svg class="ab" style="left:54px;top:7px" width="8" height="13" viewBox="0 0 8 13"><path d="M1.2 1 6.6 6.5 1.2 12" stroke="#A0A0A0" stroke-width="1.1" fill="none"/></svg><div class="ab" style="left:72.5px;top:3.5px"><svg width="20" height="20" viewBox="0 0 20 20"><circle cx="9" cy="9" r="8.8" fill="#87CEE8"/><path d="M11.3 6.4A3.4 3.4 0 1 0 11.3 11.6" stroke="#3B4D57" stroke-width="1.35" fill="none"/><circle cx="15" cy="15" r="4.9" fill="#fff" fill-opacity="0.9"/><circle cx="15" cy="15" r="3.9" fill="#5DB548"/></svg></div><div class="tt" style="left:97.5px">R<span class="gr"></span></div></div><div class="row" style="top:901px"><svg class="ab" style="left:54px;top:7px" width="8" height="13" viewBox="0 0 8 13"><path d="M1.2 1 6.6 6.5 1.2 12" stroke="#A0A0A0" stroke-width="1.1" fill="none"/></svg><div class="ab" style="left:72.5px;top:3.5px"><svg width="20" height="20" viewBox="0 0 20 20"><circle cx="9" cy="9" r="8.8" fill="#87CEE8"/><path d="M11.3 6.4A3.4 3.4 0 1 0 11.3 11.6" stroke="#3B4D57" stroke-width="1.35" fill="none"/><circle cx="15" cy="15" r="4.9" fill="#fff" fill-opacity="0.9"/><circle cx="15" cy="15" r="3.9" fill="#5DB548"/></svg></div><div class="tt" style="left:97.5px">RobustApkHashUtils<span class="gr"></span></div></div><div class="row" style="top:926px"><svg class="ab" style="left:54px;top:7px" width="8" height="13" viewBox="0 0 8 13"><path d="M1.2 1 6.6 6.5 1.2 12" stroke="#A0A0A0" stroke-width="1.1" fill="none"/></svg><div class="ab" style="left:72.5px;top:3.5px"><svg width="20" height="20" viewBox="0 0 20 20"><circle cx="9" cy="9" r="8.8" fill="#87CEE8"/><path d="M11.3 6.4A3.4 3.4 0 1 0 11.3 11.6" stroke="#3B4D57" stroke-width="1.35" fill="none"/><circle cx="15" cy="15" r="4.9" fill="#fff" fill-opacity="0.9"/><circle cx="15" cy="15" r="3.9" fill="#5DB548"/></svg></div><div class="tt" style="left:97.5px">RobustArguments<span class="gr"></span></div></div><div class="row" style="top:951px"><svg class="ab" style="left:54px;top:7px" width="8" height="13" viewBox="0 0 8 13"><path d="M1.2 1 6.6 6.5 1.2 12" stroke="#A0A0A0" stroke-width="1.1" fill="none"/></svg><div class="ab" style="left:72.5px;top:3.5px"><svg width="20" height="20" viewBox="0 0 20 20"><circle cx="9" cy="9" r="8.8" fill="#93CB83"/><path d="M6.6 5.3h4.8M6.6 12.7h4.8M9 5.3v7.4" stroke="#3A4A36" stroke-width="1.4" fill="none"/></svg></div><div class="tt" style="left:97.5px">RobustCallBack<span class="gr"></span></div></div><div class="row" style="top:976px"><svg class="ab" style="left:54px;top:7px" width="8" height="13" viewBox="0 0 8 13"><path d="M1.2 1 6.6 6.5 1.2 12" stroke="#A0A0A0" stroke-width="1.1" fill="none"/></svg><div class="ab" style="left:72.5px;top:3.5px"><svg width="20" height="20" viewBox="0 0 20 20"><circle cx="9" cy="9" r="8.8" fill="#93CB83"/><path d="M6.6 5.3h4.8M6.6 12.7h4.8M9 5.3v7.4" stroke="#3A4A36" stroke-width="1.4" fill="none"/></svg></div><div class="tt" style="left:97.5px">RobustExtension<span class="gr"></span></div></div><div class="row" style="top:1001px"><svg class="ab" style="left:31px;top:7px" width="8" height="13" viewBox="0 0 8 13"><path d="M1.2 1 6.6 6.5 1.2 12" stroke="#A0A0A0" stroke-width="1.1" fill="none"/></svg><div class="ab" style="left:50.0px;top:3.5px"><svg width="20" height="18" viewBox="0 0 20 18"><path d="M1 1.5h6.5l1.8 2.2H18.5v12.8H1z" fill="#A9B5BF"/><circle cx="7" cy="10" r="2" fill="#fff"/></svg></div><div class="tt" style="left:75.0px">ivonhoe.dexguard.java<span class="gr"></span></div></div><div class="row" style="top:1026px"><svg class="ab" style="left:6px;top:9px" width="12" height="8" viewBox="0 0 12 8"><path d="M.8 1.2 6 6.4l5.2-5.2" stroke="#A0A0A0" stroke-width="1.1" fill="none"/></svg><div class="ab" style="left:27.5px;top:3.5px"><svg width="20" height="18" viewBox="0 0 20 18"><path d="M1 1.5h6.5l1.8 2.2H17.5v5.5h-6.5v7.3H1z" fill="#A9B5BF"/><path d="M12.5 10.3h6M12.5 12.8h6M12.5 15.3h6" stroke="#F0A030" stroke-width="1.4"/></svg></div><div class="tt" style="left:52.5px"><span class="cjk">资源文件</span><span class="gr"></span></div></div><div class="row" style="top:1051px"><svg class="ab" style="left:28px;top:9px" width="12" height="8" viewBox="0 0 12 8"><path d="M.8 1.2 6 6.4l5.2-5.2" stroke="#A0A0A0" stroke-width="1.1" fill="none"/></svg><div class="ab" style="left:50.0px;top:3.5px"><svg width="20" height="18" viewBox="0 0 20 18"><path d="M1 1.5h6.5l1.8 2.2H18.5v12.8H1z" fill="#A9B5BF"/></svg></div><div class="tt" style="left:75.0px">assets<span class="gr"></span></div></div><div class="row" style="top:1076px"><div class="ab" style="left:72.5px;top:3.5px"><svg width="20" height="20" viewBox="0 0 20 20"><path d="M5 1.5h8v9h-2.5v8H2V4.5z" fill="#A9B5BF"/><path d="M2 4.2 4.7 1.5v2.7z" fill="#fff"/><path d="M12 11.3a2.5 2.5 0 1 1 3.2 2.4c-.8.3-1 .8-1 1.8" stroke="#2C9AD8" stroke-width="1.5" fill="none"/><rect x="13.4" y="17" width="1.6" height="1.8" fill="#2C9AD8"/></svg></div><div class="tt" style="left:97.5px">GeekTan.BMP<span class="gr"></span></div></div><div class="row" style="top:1101px"><div class="ab" style="left:72.5px;top:3.5px"><svg width="20" height="20" viewBox="0 0 20 20"><path d="M5 1.5h8v9h-2.5v8H2V4.5z" fill="#A9B5BF"/><path d="M2 4.2 4.7 1.5v2.7z" fill="#fff"/><path d="M12 11.3a2.5 2.5 0 1 1 3.2 2.4c-.8.3-1 .8-1 1.8" stroke="#2C9AD8" stroke-width="1.5" fill="none"/><rect x="13.4" y="17" width="1.6" height="1.8" fill="#2C9AD8"/></svg></div><div class="tt" style="left:97.5px">robust.apkhash<span class="gr"></span></div></div><div class="row" style="top:1126px"><svg class="ab" style="left:31px;top:7px" width="8" height="13" viewBox="0 0 8 13"><path d="M1.2 1 6.6 6.5 1.2 12" stroke="#A0A0A0" stroke-width="1.1" fill="none"/></svg><div class="ab" style="left:50.0px;top:3.5px"><svg width="20" height="18" viewBox="0 0 20 18"><path d="M1 1.5h6.5l1.8 2.2H18.5v12.8H1z" fill="#A9B5BF"/></svg></div><div class="tt" style="left:75.0px">META-INF<span class="gr"></span></div></div><div class="row" style="top:1151px"><svg class="ab" style="left:31px;top:7px" width="8" height="13" viewBox="0 0 8 13"><path d="M1.2 1 6.6 6.5 1.2 12" stroke="#A0A0A0" stroke-width="1.1" fill="none"/></svg><div class="ab" style="left:50.0px;top:3.5px"><svg width="20" height="18" viewBox="0 0 20 18"><path d="M1 1.5h6.5l1.8 2.2H18.5v12.8H1z" fill="#A9B5BF"/></svg></div><div class="tt" style="left:75.0px">res<span class="gr"></span></div></div><div class="row" style="top:1176px"><div class="ab" style="left:50.0px;top:3.5px"><svg width="20" height="20" viewBox="0 0 20 20"><path d="M7 1.5h6.5V10H2.5V6z" fill="#A9B5BF"/><path d="M3 5.5 6.6 1.8v3.7z" fill="#fff"/><rect x="1" y="11" width="18" height="8" fill="#CDB6F2"/><text x="10" y="18" font-family="Liberation Sans" font-size="7" font-weight="bold" text-anchor="middle" fill="#7054A8">MF</text></svg></div><div class="tt" style="left:75.0px">AndroidManifest.xml<span class="gr"></span></div></div><div class="row" style="top:1201px"><div class="ab" style="left:50.0px;top:3.5px"><svg width="20" height="20" viewBox="0 0 20 20"><path d="M7 1.5h6.5V10H2.5V6z" fill="#A9B5BF"/><path d="M3 5.5 6.6 1.8v3.7z" fill="#fff"/><rect x="1" y="11" width="18" height="8" fill="#86CFEA"/><text x="5.5" y="18" font-family="Liberation Sans" font-size="7" font-weight="bold" text-anchor="middle" fill="#2A4A5A">J</text></svg></div><div class="tt" style="left:75.0px">classes.dex<span class="gr"></span></div></div><div class="row" style="top:1226px"><svg class="ab" style="left:31px;top:7px" width="8" height="13" viewBox="0 0 8 13"><path d="M1.2 1 6.6 6.5 1.2 12" stroke="#A0A0A0" stroke-width="1.1" fill="none"/></svg><div class="ab" style="left:50.0px;top:3.5px"><svg width="20" height="20" viewBox="0 0 20 20"><path d="M1 2.5h6l1.6 2H16v5H9v9.5H1z" fill="#A9B5BF"/><rect x="10" y="14.5" width="2" height="4.5" fill="#F06A24"/><rect x="13" y="11.5" width="2" height="7.5" fill="#F0A030"/><rect x="16" y="8.5" width="2" height="10.5" fill="#5BB148"/></svg></div><div class="tt" style="left:75.0px">resources.arsc<span class="gr"></span></div></div><div class="row" style="top:1251px"><div class="ab" style="left:27.5px;top:3.5px"><svg width="20" height="20" viewBox="0 0 20 20"><path d="M5.5 1.5h6v4H10v4H9v7H2.5V4.5z" fill="#A9B5BF"/><path d="M4.5 8.5h4M4.5 11h4M4.5 13.5h4" stroke="#fff" stroke-width="1"/><circle cx="14" cy="9" r="3" stroke="#2C9AD8" stroke-width="1.8" fill="none"/><path d="M14 12v7M14 16.5h2.2" stroke="#2C9AD8" stroke-width="1.8"/></svg></div><div class="tt" style="left:52.5px">APK signature<span class="gr"></span></div></div><div class="row" style="top:1276px"><div class="ab" style="left:27.5px;top:3.5px"><svg width="20" height="20" viewBox="0 0 20 20"><rect x="2" y="2.5" width="16" height="16" fill="none" stroke="#6E6E6E" stroke-width="2"/><path d="M5.5 14.5h9v-2h-3v-4h-2v2h-2v-3h-2z" fill="#6E6E6E"/></svg></div><div class="tt" style="left:52.5px">Summary<span class="gr"></span></div></div></div></div>
<div id="hsb"><div></div></div>
<div class="ab" style="left:382.0px;top:84.5px"><svg width="20" height="20" viewBox="0 0 20 20"><circle cx="9" cy="9" r="8.8" fill="#87CEE8"/><path d="M11.3 6.4A3.4 3.4 0 1 0 11.3 11.6" stroke="#3B4D57" stroke-width="1.35" fill="none"/><circle cx="15" cy="15" r="4.9" fill="#fff" fill-opacity="0.9"/><circle cx="15" cy="15" r="3.9" fill="#5DB548"/></svg></div><div class="tabt" style="left:406.0px">MainActivity</div><svg class="ab" style="left:536px;top:87px" width="13" height="13" viewBox="0 0 13 13"><path d="M1.5 1.5l10 10M11.5 1.5l-10 10" stroke="#A9AEB2" stroke-width="1.1"/></svg><div class="ab" style="left:583.6px;top:84.5px"><svg width="20" height="20" viewBox="0 0 20 20"><circle cx="9" cy="9" r="8.8" fill="#87CEE8"/><path d="M11.3 6.4A3.4 3.4 0 1 0 11.3 11.6" stroke="#3B4D57" stroke-width="1.35" fill="none"/><circle cx="15" cy="15" r="4.9" fill="#fff" fill-opacity="0.9"/><circle cx="15" cy="15" r="3.9" fill="#5DB548"/></svg></div><div class="tabt" style="left:607.6px">PatchManipulateImp</div><svg class="ab" style="left:795px;top:87px" width="13" height="13" viewBox="0 0 13 13"><path d="M1.5 1.5l10 10M11.5 1.5l-10 10" stroke="#A9AEB2" stroke-width="1.1"/></svg><div class="ab" style="left:568.1px;top:111px;width:257.6px;height:2px;background:#2E75C2"></div><div class="ab" style="left:568.1px;top:113px;width:257.6px;height:1px;background:#98BBDF"></div><div class="ab" style="left:568.1px;top:114px;width:257.6px;height:1px;background:#6D9BCB"></div><div class="ab" style="left:842.2px;top:84.5px"><svg width="20" height="20" viewBox="0 0 20 20"><circle cx="9" cy="9" r="8.8" fill="#87CEE8"/><path d="M11.3 6.4A3.4 3.4 0 1 0 11.3 11.6" stroke="#3B4D57" stroke-width="1.35" fill="none"/><circle cx="15" cy="15" r="4.9" fill="#fff" fill-opacity="0.9"/><circle cx="15" cy="15" r="3.9" fill="#5DB548"/></svg></div><div class="tabt" style="left:866.2px">PatchProxy</div><svg class="ab" style="left:977px;top:87px" width="13" height="13" viewBox="0 0 13 13"><path d="M1.5 1.5l10 10M11.5 1.5l-10 10" stroke="#A9AEB2" stroke-width="1.1"/></svg><div class="ab" style="left:1024.8px;top:84.5px"><svg width="20" height="20" viewBox="0 0 20 20"><circle cx="9" cy="9" r="8.8" fill="#93CB83"/><path d="M6.6 5.3h4.8M6.6 12.7h4.8M9 5.3v7.4" stroke="#3A4A36" stroke-width="1.4" fill="none"/></svg></div><div class="tabt" style="left:1048.8px">RobustExtension</div><svg class="ab" style="left:1207px;top:87px" width="13" height="13" viewBox="0 0 13 13"><path d="M1.5 1.5l10 10M11.5 1.5l-10 10" stroke="#A9AEB2" stroke-width="1.1"/></svg><div class="ab" style="left:1254.9px;top:84.5px"><svg width="20" height="20" viewBox="0 0 20 20"><circle cx="9" cy="9" r="8.8" fill="#93CB83"/><path d="M6.6 5.3h4.8M6.6 12.7h4.8M9 5.3v7.4" stroke="#3A4A36" stroke-width="1.4" fill="none"/></svg></div><div class="tabt" style="left:1278.9px">ChangeQuickRedirect</div><svg class="ab" style="left:1475px;top:87px" width="13" height="13" viewBox="0 0 13 13"><path d="M1.5 1.5l10 10M11.5 1.5l-10 10" stroke="#A9AEB2" stroke-width="1.1"/></svg><div class="ab" style="left:1523.0px;top:84.5px"><svg width="20" height="20" viewBox="0 0 20 20"><circle cx="9" cy="9" r="8.8" fill="#87CEE8"/><path d="M11.3 6.4A3.4 3.4 0 1 0 11.3 11.6" stroke="#3B4D57" stroke-width="1.35" fill="none"/><circle cx="15" cy="15" r="4.9" fill="#fff" fill-opacity="0.9"/><circle cx="15" cy="15" r="3.9" fill="#5DB548"/></svg></div><div class="tabt" style="left:1547.0px">PatchExecutor</div><svg class="ab" style="left:1687px;top:87px" width="13" height="13" viewBox="0 0 13 13"><path d="M1.5 1.5l10 10M11.5 1.5l-10 10" stroke="#A9AEB2" stroke-width="1.1"/></svg><div class="ab" style="left:1734.1px;top:84.5px"><svg width="20" height="20" viewBox="0 0 20 20"><circle cx="9" cy="9" r="8.8" fill="#87CEE8"/><path d="M11.3 6.4A3.4 3.4 0 1 0 11.3 11.6" stroke="#3B4D57" stroke-width="1.35" fill="none"/><circle cx="15" cy="15" r="4.9" fill="#fff" fill-opacity="0.9"/><circle cx="15" cy="15" r="3.9" fill="#5DB548"/></svg></div><div class="tabt" style="left:1758.1px">EnhancedRobustUtils</div><svg class="ab" style="left:1955px;top:87px" width="13" height="13" viewBox="0 0 13 13"><path d="M1.5 1.5l10 10M11.5 1.5l-10 10" stroke="#A9AEB2" stroke-width="1.1"/></svg><div class="ab" style="left:2002.2px;top:84.5px"><svg width="20" height="20" viewBox="0 0 20 20"><circle cx="9" cy="9" r="8.8" fill="#93CB83"/><path d="M6.6 5.3h4.8M6.6 12.7h4.8M9 5.3v7.4" stroke="#3A4A36" stroke-width="1.4" fill="none"/></svg></div><div class="tabt" style="left:2026.2px">PatchesInfo</div><svg class="ab" style="left:2147px;top:87px" width="13" height="13" viewBox="0 0 13 13"><path d="M1.5 1.5l10 10M11.5 1.5l-10 10" stroke="#A9AEB2" stroke-width="1.1"/></svg><div class="ab" style="left:2194.3px;top:84.5px"><svg width="20" height="20" viewBox="0 0 20 20"><circle cx="9" cy="9" r="8.8" fill="#87CEE8"/><path d="M11.3 6.4A3.4 3.4 0 1 0 11.3 11.6" stroke="#3B4D57" stroke-width="1.35" fill="none"/><circle cx="15" cy="15" r="4.9" fill="#fff" fill-opacity="0.9"/><circle cx="15" cy="15" r="3.9" fill="#5DB548"/></svg></div><div class="tabt" style="left:2218.3px">PatchTemplate</div><svg class="ab" style="left:2358px;top:87px" width="13" height="13" viewBox="0 0 13 13"><path d="M1.5 1.5l10 10M11.5 1.5l-10 10" stroke="#A9AEB2" stroke-width="1.1"/></svg><div class="ab" style="left:2405.4px;top:84.5px"><svg width="20" height="20" viewBox="0 0 20 20"><circle cx="9" cy="9" r="8.8" fill="#87CEE8"/><path d="M11.3 6.4A3.4 3.4 0 1 0 11.3 11.6" stroke="#3B4D57" stroke-width="1.35" fill="none"/><circle cx="15" cy="15" r="4.9" fill="#fff" fill-opacity="0.9"/><circle cx="15" cy="15" r="3.9" fill="#5DB548"/></svg></div><div class="tabt" style="left:2429.4px">Patch</div><svg class="ab" style="left:2493px;top:87px" width="13" height="13" viewBox="0 0 13 13"><path d="M1.5 1.5l10 10M11.5 1.5l-10 10" stroke="#A9AEB2" stroke-width="1.1"/></svg><svg class="ab" style="left:350px;top:86px" width="12" height="16" viewBox="0 0 12 16"><path d="M9 1.5 2.5 8 9 14.5" stroke="#000" stroke-width="1.2" fill="none"/></svg><svg class="ab" style="left:2513px;top:86px" width="12" height="16" viewBox="0 0 12 16"><path d="M3 1.5 9.5 8 3 14.5" stroke="#000" stroke-width="1.2" fill="none"/></svg><svg class="ab" style="left:2536px;top:86px" width="18" height="12" viewBox="0 0 18 12"><path d="M1.5 2.5 9 10l7.5-7.5" stroke="#000" stroke-width="1.2" fill="none"/></svg>
<div class="ab" style="left:346px;top:114px;width:2214px;height:1px;background:#DCDAD8"></div>
<svg class="ab" style="left:340px;top:714px" width="6" height="20" viewBox="0 0 6 20"><g fill="#ABABAB"><circle cx="2.9" cy="3.8" r="1.8"/><circle cx="2.9" cy="10" r="1.8"/><circle cx="2.9" cy="16.3" r="1.8"/></g></svg>
<svg class="ab" style="left:1270px;top:1373px" width="20" height="7" viewBox="0 0 20 7"><g fill="#ABABAB"><circle cx="4" cy="3.6" r="1.8"/><circle cx="10.3" cy="3.6" r="1.8"/><circle cx="16.5" cy="3.6" r="1.8"/></g></svg>
<svg class="ab" style="left:1442px;top:1367px" width="20" height="7" viewBox="0 0 20 7"><g fill="#ABABAB"><circle cx="4.5" cy="3.3" r="1.8"/><circle cx="10.6" cy="3.3" r="1.8"/><circle cx="17" cy="3.3" r="1.8"/></g></svg>
<div id="editor">
<div id="gutter"><div class="gl" style="top:-16px">69</div><div class="gl" style="top:4px">70</div><div class="gl" style="top:24px">71</div><div class="gl" style="top:44px">72</div><div class="gl" style="top:64px">73</div><div class="gl" style="top:84px">74</div><div class="gl" style="top:104px">75</div><div class="gl" style="top:124px">76</div><div class="gl" style="top:144px">77</div><div class="gl" style="top:164px">78</div><div class="gl" style="top:184px">79</div><div class="gl" style="top:204px">80</div><div class="gl" style="top:224px">81</div><div class="gl" style="top:244px">82</div><div class="gl" style="top:264px">83</div><div class="gl" style="top:284px">84</div><div class="gl" style="top:304px">85</div><div class="gl" style="top:324px">86</div><div class="gl" style="top:344px">87</div><div class="gl" style="top:364px">88</div><div class="gl" style="top:384px">89</div><div class="gl" style="top:404px">90</div><div class="gl" style="top:424px">91</div><div class="gl" style="top:444px">92</div><div class="gl" style="top:464px">93</div><div class="gl" style="top:484px">94</div><div class="gl" style="top:504px">95</div><div class="gl" style="top:524px">96</div><div class="gl" style="top:544px">97</div><div class="gl" style="top:564px">98</div><div class="gl" style="top:584px">99</div><div class="gl" style="top:604px">100</div><div class="gl" style="top:624px">101</div><div class="gl" style="top:644px">102</div><div class="gl" style="top:664px">103</div><div class="gl" style="top:684px">104</div><div class="gl" style="top:704px">105</div><div class="gl" style="top:724px">106</div><div class="gl" style="top:744px">107</div><div class="gl" style="top:764px">108</div><div class="gl" style="top:784px">109</div><div class="gl" style="top:804px">110</div><div class="gl" style="top:824px">111</div><div class="gl" style="top:844px">112</div><div class="gl" style="top:864px">113</div><div class="gl" style="top:884px">114</div><div class="gl" style="top:904px">115</div><div class="gl" style="top:924px">116</div><div class="gl" style="top:944px">117</div><div class="gl" style="top:964px">118</div><div class="gl" style="top:984px">119</div><div class="gl" style="top:1004px">120</div><div class="gl" style="top:1024px">121</div><div class="gl" style="top:1044px">122</div><div class="gl" style="top:1064px">123</div><div class="gl" style="top:1084px">124</div><div class="gl" style="top:1104px">125</div><div class="gl" style="top:1124px">126</div><div class="gl" style="top:1144px">127</div><div class="gl" style="top:1164px">128</div><div class="gl" style="top:1184px">129</div><div class="gl" style="top:1204px">130</div></div>
<div class="ab" style="left:59px;top:102px;width:2140px;height:20px;background:#FFFFAA"></div><div class="ab" style="left:276px;top:102px;width:127px;height:20px;background:#FFC800"></div>
<div id="code"><div class="cl" style="top:-16px">    <span class="an">@Override</span> <i class="cm">// com.meituan.robust.PatchManipulate</i></div><div class="cl" style="top:4px">    <b class="kw">public</b> <b class="dt">boolean</b> ensurePatchExist<span class="se">(</span>Patch patch<span class="se">)</span> <span class="se">{</span></div><div class="cl" style="top:24px">        <b class="kw">return</b> <b class="kw">true</b>;</div><div class="cl" style="top:44px">    <span class="se">}</span></div><div class="cl" style="top:64px"></div><div class="cl" style="top:84px">    <span class="an">@Override</span> <i class="cm">// com.meituan.robust.PatchManipulate</i></div><div class="cl" style="top:104px">    <b class="kw">public</b> <span class="sd">List</span><span class="op">&lt;</span>Patch<span class="op">&gt;</span> fetchPatchList<span class="se">(</span>Context context<span class="se">)</span> <span class="se">{</span></div><div class="cl" style="top:124px">        <span class="sd">Object</span><span class="se">[</span><span class="se">]</span> objArr <span class="op">=</span> <b class="kw">new</b> <span class="sd">Object</span><span class="se">[</span><span class="nu">1</span><span class="se">]</span>;</div><div class="cl" style="top:144px">        objArr<span class="se">[</span><span class="nu">0</span><span class="se">]</span> <span class="op">=</span> context;</div><div class="cl" style="top:164px">        ChangeQuickRedirect changeQuickRedirect2 <span class="op">=</span> changeQuickRedirect;</div><div class="cl" style="top:184px">        <span class="sd">Class</span><span class="se">[</span><span class="se">]</span> clsArr <span class="op">=</span> <b class="kw">new</b> <span class="sd">Class</span><span class="se">[</span><span class="nu">1</span><span class="se">]</span>;</div><div class="cl" style="top:204px">        clsArr<span class="se">[</span><span class="nu">0</span><span class="se">]</span> <span class="op">=</span> Context.<b class="kw">class</b>;</div><div class="cl" style="top:224px">        <b class="kw">if</b> <span class="se">(</span>PatchProxy.isSupport<span class="se">(</span>objArr, <b class="kw">this</b>, changeQuickRedirect2, <b class="kw">false</b>, <span class="nu">15</span>, clsArr, <span class="sd">List</span>.<b class="kw">class</b><span class="se">)</span><span class="se">)</span> <span class="se">{</span></div><div class="cl" style="top:244px">            <span class="sd">Object</span><span class="se">[</span><span class="se">]</span> objArr2 <span class="op">=</span> <b class="kw">new</b> <span class="sd">Object</span><span class="se">[</span><span class="nu">1</span><span class="se">]</span>;</div><div class="cl" style="top:264px">            objArr2<span class="se">[</span><span class="nu">0</span><span class="se">]</span> <span class="op">=</span> context;</div><div class="cl" style="top:284px">            ChangeQuickRedirect changeQuickRedirect3 <span class="op">=</span> changeQuickRedirect;</div><div class="cl" style="top:304px">            <span class="sd">Class</span><span class="se">[</span><span class="se">]</span> clsArr2 <span class="op">=</span> <b class="kw">new</b> <span class="sd">Class</span><span class="se">[</span><span class="nu">1</span><span class="se">]</span>;</div><div class="cl" style="top:324px">            clsArr2<span class="se">[</span><span class="nu">0</span><span class="se">]</span> <span class="op">=</span> Context.<b class="kw">class</b>;</div><div class="cl" style="top:344px">            <b class="kw">return</b> <span class="se">(</span><span class="sd">List</span><span class="se">)</span> PatchProxy.accessDispatch<span class="se">(</span>objArr2, <b class="kw">this</b>, changeQuickRedirect3, <b class="kw">false</b>, <span class="nu">15</span>, clsArr2, <span class="sd">List</span>.<b class="kw">class</b><span class="se">)</span>;</div><div class="cl" style="top:364px">        <span class="se">}</span></div><div class="cl" style="top:384px">        RobustApkHashUtils.readRobustApkHash<span class="se">(</span>context<span class="se">)</span>;</div><div class="cl" style="top:404px">        Patch patch <span class="op">=</span> <b class="kw">new</b> Patch<span class="se">(</span><span class="se">)</span>;</div><div class="cl" style="top:424px">        <b class="kw">try</b> <span class="se">{</span></div><div class="cl" style="top:444px">            <span class="sd">InputStream</span> in <span class="op">=</span> context.getAssets<span class="se">(</span><span class="se">)</span>.open<span class="se">(</span><span class="st">&quot;GeekTan.BMP&quot;</span><span class="se">)</span>;</div><div class="cl" style="top:464px">            <span class="sd">File</span> dst <span class="op">=</span> <b class="kw">new</b> <span class="sd">File</span><span class="se">(</span>context.getCacheDir<span class="se">(</span><span class="se">)</span> <span class="op">+</span> <span class="sd">File</span>.separator <span class="op">+</span> <span class="st">&quot;GeekTan&quot;</span> <span class="op">+</span> <span class="sd">File</span>.separator <span class="op">+</span> <span class="st">&quot;GeekTan.jar&quot;</span><span class="se">)</span>;</div><div class="cl" style="top:484px">            <b class="kw">if</b> <span class="se">(</span><span class="op">!</span>dst.getParentFile<span class="se">(</span><span class="se">)</span>.exists<span class="se">(</span><span class="se">)</span><span class="se">)</span> <span class="se">{</span></div><div class="cl" style="top:504px">                dst.getParentFile<span class="se">(</span><span class="se">)</span>.mkdirs<span class="se">(</span><span class="se">)</span>;</div><div class="cl" style="top:524px">            <span class="se">}</span></div><div class="cl" style="top:544px">            <b class="kw">try</b> <span class="se">{</span></div><div class="cl" style="top:564px">                <span class="sd">OutputStream</span> out <span class="op">=</span> <b class="kw">new</b> <span class="sd">FileOutputStream</span><span class="se">(</span>dst<span class="se">)</span>;</div><div class="cl" style="top:584px">                <b class="kw">try</b> <span class="se">{</span></div><div class="cl" style="top:604px">                    <b class="dt">byte</b><span class="se">[</span><span class="se">]</span> buf <span class="op">=</span> <b class="kw">new</b> <b class="dt">byte</b><span class="se">[</span><span class="nu">1024</span><span class="se">]</span>;</div><div class="cl" style="top:624px">                    <b class="kw">while</b> <span class="se">(</span><b class="kw">true</b><span class="se">)</span> <span class="se">{</span></div><div class="cl" style="top:644px">                        <b class="dt">int</b> len <span class="op">=</span> in.read<span class="se">(</span>buf<span class="se">)</span>;</div><div class="cl" style="top:664px">                        <b class="kw">if</b> <span class="se">(</span>len <span class="op">&lt;=</span> <span class="nu">0</span><span class="se">)</span> <span class="se">{</span></div><div class="cl" style="top:684px">                            <b class="kw">break</b>;</div><div class="cl" style="top:704px">                        <span class="se">}</span></div><div class="cl" style="top:724px">                        out.write<span class="se">(</span>buf, <span class="nu">0</span>, len<span class="se">)</span>;</div><div class="cl" style="top:744px">                    <span class="se">}</span></div><div class="cl" style="top:764px">                    in.close<span class="se">(</span><span class="se">)</span>;</div><div class="cl" style="top:784px">                <span class="se">}</span> <b class="kw">finally</b> <span class="se">{</span></div><div class="cl" style="top:804px">                    out.close<span class="se">(</span><span class="se">)</span>;</div><div class="cl" style="top:824px">                <span class="se">}</span></div><div class="cl" style="top:844px">            <span class="se">}</span> <b class="kw">catch</b> <span class="se">(</span><span class="sd">Throwable</span> th<span class="se">)</span> <span class="se">{</span></div><div class="cl" style="top:864px">                in.close<span class="se">(</span><span class="se">)</span>;</div><div class="cl" style="top:884px">                <b class="kw">throw</b> th;</div><div class="cl" style="top:904px">            <span class="se">}</span></div><div class="cl" style="top:924px">        <span class="se">}</span> <b class="kw">catch</b> <span class="se">(</span><span class="sd">Exception</span> e<span class="se">)</span> <span class="se">{</span></div><div class="cl" style="top:944px">            e.printStackTrace<span class="se">(</span><span class="se">)</span>;</div><div class="cl" style="top:964px">        <span class="se">}</span></div><div class="cl" style="top:984px">        patch.setLocalPath<span class="se">(</span>context.getCacheDir<span class="se">(</span><span class="se">)</span> <span class="op">+</span> <span class="sd">File</span>.separator <span class="op">+</span> <span class="st">&quot;GeekTan&quot;</span> <span class="op">+</span> <span class="sd">File</span>.separator <span class="op">+</span> <span class="st">&quot;GeekTan&quot;</span><span class="se">)</span>;</div><div class="cl" style="top:1004px">        patch.setPatchesInfoImplClassFullName<span class="se">(</span><span class="st">&quot;cn.chaitin.geektan.crackme.PatchesInfoImpl&quot;</span><span class="se">)</span>;</div><div class="cl" style="top:1024px">        <span class="sd">ArrayList</span> arrayList <span class="op">=</span> <b class="kw">new</b> <span class="sd">ArrayList</span><span class="se">(</span><span class="se">)</span>;</div><div class="cl" style="top:1044px">        arrayList.add<span class="se">(</span>patch<span class="se">)</span>;</div><div class="cl" style="top:1064px">        <b class="kw">return</b> arrayList;</div><div class="cl" style="top:1084px">    <span class="se">}</span></div><div class="cl" style="top:1104px"></div><div class="cl" style="top:1124px">    <span class="an">@Override</span> <i class="cm">// com.meituan.robust.PatchManipulate</i></div><div class="cl" style="top:1144px">    <b class="kw">public</b> <b class="dt">boolean</b> verifyPatch<span class="se">(</span>Context context, Patch patch<span class="se">)</span> <span class="se">{</span></div><div class="cl" style="top:1164px">        <span class="sd">Object</span><span class="se">[</span><span class="se">]</span> objArr <span class="op">=</span> <b class="kw">new</b> <span class="sd">Object</span><span class="se">[</span><span class="nu">2</span><span class="se">]</span>;</div><div class="cl" style="top:1184px">        objArr<span class="se">[</span><span class="nu">0</span><span class="se">]</span> <span class="op">=</span> context;</div><div class="cl" style="top:1204px">        objArr<span class="se">[</span><span class="nu">1</span><span class="se">]</span> <span class="op">=</span> patch;</div></div>
<div class="ab" style="left:366px;top:104px;width:1px;height:18px;background:#FF0000"></div><div class="ab" style="left:368px;top:104px;width:1px;height:18px;background:#FF0000"></div>
<div id="vsb"><div></div></div>
</div>
<div class="ab" style="left:346px;top:1326px;width:60px;height:4px;background:#3A80C8"></div>
<div class="btab" style="left:361px">代码</div>
<div class="btab" style="left:421px">Smali</div>
<div class="btab" style="left:490px">Simple</div>
<div class="btab" style="left:570px">Fallback</div>
<div class="ab" style="left:709px;top:1338px;width:17px;height:17px;border:1px solid #9A9A9A;border-radius:3px;background:#fff"></div>
<div class="btab" style="left:731px;top:1338px;letter-spacing:0.2px">Split view</div>
<div class="ab" style="left:6px;top:1347px;font-size:16px;line-height:20px">问题:</div>
<svg class="ab" style="left:266px;top:1346px" width="20" height="18" viewBox="0 0 20 18"><path d="M10 1.5 19 17H1z" fill="#F2A33A"/><path d="M10 6.5v5.5" stroke="#fff" stroke-width="2"/><rect x="9" y="13.5" width="2" height="2" fill="#fff"/></svg>
<div class="ab" style="left:291px;top:1347px;font-size:15.5px;line-height:20px">4 警告</div>
</body></html>
